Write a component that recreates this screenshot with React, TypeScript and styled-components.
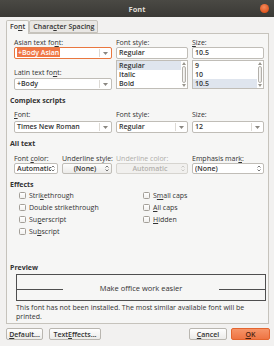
import styled, { createGlobalStyle } from 'styled-components';

const GlobalStyle = createGlobalStyle`
  html, body {
    margin: 0;
    padding: 0;
  }
  body {
    background: #f2f1f0;
    font-family: "Open Sans", "Noto Sans", "DejaVu Sans", sans-serif;
    font-size: 7px;
    color: #333;
  }
`;

function DropArrow() {
  return (
    <svg width="5" height="3" viewBox="0 0 5 3">
      <path d="M0 0 L5 0 L2.5 3 Z" fill="#8a8781" />
    </svg>
  );
}

function UpDown({ color = '#555' }: { color?: string }) {
  return (
    <svg width="4" height="7" viewBox="0 0 4 7">
      <path d="M0.5 2.5 L2 1 L3.5 2.5" stroke={color} fill="none" strokeWidth="0.8" />
      <path d="M0.5 4.5 L2 6 L3.5 4.5" stroke={color} fill="none" strokeWidth="0.8" />
    </svg>
  );
}

function ScrollBar() {
  return (
    <Scroll>
      <svg width="4" height="3" viewBox="0 0 4 3">
        <path d="M0 3 L2 0 L4 3 Z" fill="#9a978f" />
      </svg>
      <Thumb />
      <svg width="4" height="3" viewBox="0 0 4 3">
        <path d="M0 0 L4 0 L2 3 Z" fill="#9a978f" />
      </svg>
    </Scroll>
  );
}

export default function App() {
  return (
    <>
      <GlobalStyle />
      <Window>
        <TitleBar>
          <span />
          <Title>Font</Title>
          <CloseButton />
        </TitleBar>
        <Body>
          <TabBar>
            <Tab $active>
              Fo<u>n</u>t
            </Tab>
            <Tab>
              Chara<u>c</u>ter Spacing
            </Tab>
          </TabBar>
          <Panel>
            <FieldGrid $top={0}>
              <Field>
                <Label>
                  Asian text fo<u>n</u>t:
                </Label>
                <Combo $focused>
                  <ComboText>
                    <Selection>+Body Asian</Selection>
                  </ComboText>
                  <ComboArrow>
                    <DropArrow />
                  </ComboArrow>
                </Combo>
                <Label $top={9}>
                  Latin text fo<u>n</u>t:
                </Label>
                <Combo $top={1}>
                  <ComboText>+Body</ComboText>
                  <ComboArrow>
                    <DropArrow />
                  </ComboArrow>
                </Combo>
              </Field>
              <Field>
                <Label>Font style:</Label>
                <TextBox>Regular</TextBox>
                <ListBox>
                  <ListRows>
                    <ListRow $selected>Regular</ListRow>
                    <ListRow>Italic</ListRow>
                    <ListRow>Bold</ListRow>
                  </ListRows>
                  <ScrollBar />
                </ListBox>
              </Field>
              <Field>
                <Label>
                  <u>S</u>ize:
                </Label>
                <TextBox>10.5</TextBox>
                <ListBox>
                  <ListRows>
                    <ListRow>9</ListRow>
                    <ListRow>10</ListRow>
                    <ListRow $selected>10.5</ListRow>
                  </ListRows>
                  <ScrollBar />
                </ListBox>
              </Field>
            </FieldGrid>

            <Heading $top={6}>Complex scripts</Heading>
            <FieldGrid $top={5}>
              <Field>
                <Label>
                  <u>F</u>ont:
                </Label>
                <Combo $top={2}>
                  <ComboText>Times New Roman</ComboText>
                  <ComboArrow>
                    <DropArrow />
                  </ComboArrow>
                </Combo>
              </Field>
              <Field>
                <Label>Font style:</Label>
                <Combo $top={2}>
                  <ComboText>Regular</ComboText>
                  <ComboArrow>
                    <DropArrow />
                  </ComboArrow>
                </Combo>
              </Field>
              <Field>
                <Label>Size:</Label>
                <Combo $top={2}>
                  <ComboText>12</ComboText>
                  <ComboArrow>
                    <DropArrow />
                  </ComboArrow>
                </Combo>
              </Field>
            </FieldGrid>

            <Heading $top={6}>All text</Heading>
            <AllTextGrid>
              <Field>
                <Label>
                  Font <u>c</u>olor:
                </Label>
                <Spin>
                  <SpinText>Automatic</SpinText>
                  <UpDown />
                </Spin>
              </Field>
              <Field>
                <Label>Underline style:</Label>
                <Spin $variant="button">
                  <SpinText $center>(None)</SpinText>
                  <UpDown />
                </Spin>
              </Field>
              <Field>
                <Label $disabled>Underline color:</Label>
                <Spin $variant="disabled">
                  <SpinText $center>Automatic</SpinText>
                  <UpDown color="#c2c0bb" />
                </Spin>
              </Field>
              <Field>
                <Label>
                  Emphasis mar<u>k</u>:
                </Label>
                <Spin>
                  <SpinText>(None)</SpinText>
                  <UpDown />
                </Spin>
              </Field>
            </AllTextGrid>

            <Heading $top={6}>Effects</Heading>
            <Effects>
              <CheckColumn>
                <CheckRow>
                  <CheckBox />
                  <span>
                    Stri<u>k</u>ethrough
                  </span>
                </CheckRow>
                <CheckRow>
                  <CheckBox />
                  <span>Double strikethrough</span>
                </CheckRow>
                <CheckRow>
                  <CheckBox />
                  <span>
                    Su<u>p</u>erscript
                  </span>
                </CheckRow>
                <CheckRow>
                  <CheckBox />
                  <span>
                    Su<u>b</u>script
                  </span>
                </CheckRow>
              </CheckColumn>
              <CheckColumn>
                <CheckRow>
                  <CheckBox />
                  <span>
                    S<u>m</u>all caps
                  </span>
                </CheckRow>
                <CheckRow>
                  <CheckBox />
                  <span>
                    <u>A</u>ll caps
                  </span>
                </CheckRow>
                <CheckRow>
                  <CheckBox />
                  <span>
                    <u>H</u>idden
                  </span>
                </CheckRow>
              </CheckColumn>
            </Effects>

            <Heading $top={26}>Preview</Heading>
            <PreviewBox>
              <PreviewLine />
              <PreviewText>Make office work easier</PreviewText>
              <PreviewLine />
            </PreviewBox>
            <Warning>
              This font has not been installed. The most similar available font will be
              printed.
            </Warning>
          </Panel>
          <ButtonRow>
            <Button $w={37}>
              <u>D</u>efault...
            </Button>
            <Button $w={52} $gap={6}>
              Text <u>E</u>ffects...
            </Button>
            <Spacer />
            <Button $w={38}>
              <u>C</u>ancel
            </Button>
            <Button $w={39} $gap={4} $primary>
              <u>O</u>K
            </Button>
          </ButtonRow>
        </Body>
      </Window>
    </>
  );
}

/* STYLES **********************************************************/

const Window = styled.div`
  width: 274px;
  height: 346px;
  display: flex;
  flex-direction: column;
  background: #f2f1f0;
  overflow: hidden;
`;

const TitleBar = styled.div`
  height: 17px;
  flex: none;
  display: grid;
  grid-template-columns: 1fr auto 1fr;
  align-items: center;
  background: linear-gradient(#4a4944, #3a3935);
`;

const Title = styled.span`
  color: #dfdbd2;
  font-weight: 700;
  font-size: 7.5px;
`;

const CloseButton = styled.span`
  justify-self: end;
  margin-right: 5px;
  width: 9px;
  height: 9px;
  border-radius: 50%;
  background: radial-gradient(circle at 45% 35%, #f58a5c, #e0561f 70%);
`;

const Body = styled.div`
  flex: 1;
  display: flex;
  flex-direction: column;
  padding: 3px 5px 0 6px;
`;

const TabBar = styled.div`
  display: flex;
  height: 13px;
`;

const Tab = styled.div<{ $active?: boolean }>`
  position: relative;
  z-index: ${(p) => (p.$active ? 1 : 0)};
  height: ${(p) => (p.$active ? 14 : 13)}px;
  box-sizing: border-box;
  padding: 0 3px;
  line-height: 12px;
  border: 1px solid #c6c3bc;
  border-bottom: ${(p) => (p.$active ? 'none' : '1px solid #c6c3bc')};
  border-radius: 2px 2px 0 0;
  background: ${(p) => (p.$active ? '#f6f6f5' : '#e9e7e4')};
  color: #333;
  font-weight: 600;
  white-space: nowrap;
`;

const Panel = styled.div`
  height: 291px;
  box-sizing: border-box;
  border: 1px solid #c6c3bc;
  background: #f6f6f5;
  padding: 4px 4px 0 3px;
  display: flex;
  flex-direction: column;
`;

const Heading = styled.div<{ $top: number }>`
  margin-top: ${(p) => p.$top}px;
  height: 9px;
  line-height: 9px;
  font-weight: 700;
  color: #333;
`;

const FieldGrid = styled.div<{ $top: number }>`
  display: grid;
  grid-template-columns: 98px 72px 72px;
  column-gap: 4px;
  margin-left: 4px;
  margin-top: ${(p) => p.$top}px;
`;

const AllTextGrid = styled.div`
  display: grid;
  grid-template-columns: 44px 50px 72px 72px;
  column-gap: 4px;
  margin-left: 4px;
  margin-top: 6px;
`;

const Field = styled.div`
  display: flex;
  flex-direction: column;
  min-width: 0;
`;

const Label = styled.div<{ $top?: number; $disabled?: boolean }>`
  margin-top: ${(p) => p.$top ?? 0}px;
  height: 9px;
  line-height: 9px;
  white-space: nowrap;
  font-weight: 500;
  color: ${(p) => (p.$disabled ? '#b0aeaa' : '#333')};
`;

const Combo = styled.div<{ $focused?: boolean; $top?: number }>`
  margin-top: ${(p) => p.$top ?? 0}px;
  height: 12px;
  box-sizing: border-box;
  display: flex;
  align-items: center;
  border: 1px solid ${(p) => (p.$focused ? '#e9773f' : '#c0bdb7')};
  border-radius: 2px;
  background: #fff;
`;

const ComboText = styled.div`
  flex: 1;
  min-width: 0;
  padding-left: 2px;
  white-space: nowrap;
  overflow: hidden;
  line-height: 10px;
  font-weight: 600;
  color: #333;
`;

const ComboArrow = styled.div`
  width: 11px;
  height: 8px;
  display: flex;
  align-items: center;
  justify-content: center;
  border-left: 1px solid #dddad5;
`;

const Selection = styled.span`
  background: #f07746;
  color: #fff;
  padding: 0 1px;
`;

const TextBox = styled.div`
  height: 12px;
  box-sizing: border-box;
  border: 1px solid #c0bdb7;
  border-radius: 2px;
  background: #fff;
  padding-left: 2px;
  line-height: 10px;
  font-weight: 600;
  color: #333;
`;

const ListBox = styled.div`
  margin-top: 1px;
  height: 29px;
  box-sizing: border-box;
  display: flex;
  border: 1px solid #c0bdb7;
  background: #fff;
`;

const ListRows = styled.div`
  flex: 1;
  display: flex;
  flex-direction: column;
`;

const ListRow = styled.div<{ $selected?: boolean }>`
  height: 9px;
  line-height: 9px;
  padding-left: 2px;
  background: ${(p) => (p.$selected ? '#dfe5ee' : 'transparent')};
  color: #333;
  font-weight: 600;
`;

const Scroll = styled.div`
  width: 6px;
  display: flex;
  flex-direction: column;
  align-items: center;
  padding: 1px 0;
  box-sizing: border-box;
`;

const Thumb = styled.div`
  flex: 1;
  width: 4px;
  margin: 1px 0;
  box-sizing: border-box;
  border: 1px solid #b3b0aa;
  border-radius: 3px;
  background: linear-gradient(90deg, #fbfbfa, #e6e4e1);
`;

const Spin = styled.div<{ $variant?: 'button' | 'disabled' }>`
  height: 11px;
  box-sizing: border-box;
  display: flex;
  align-items: center;
  padding: 0 2px;
  border: 1px solid ${(p) => (p.$variant === 'disabled' ? '#d6d4cf' : '#c0bdb7')};
  border-radius: 2px;
  background: ${(p) =>
    p.$variant === 'button'
      ? 'linear-gradient(#fdfdfc, #ecebe9)'
      : p.$variant === 'disabled'
        ? '#f1f0ee'
        : '#fff'};
  color: ${(p) => (p.$variant === 'disabled' ? '#b3b1ad' : '#333')};
`;

const SpinText = styled.div<{ $center?: boolean }>`
  flex: 1;
  min-width: 0;
  white-space: nowrap;
  overflow: hidden;
  text-align: ${(p) => (p.$center ? 'center' : 'left')};
  line-height: 9px;
  font-weight: 600;
`;

const Effects = styled.div`
  display: grid;
  grid-template-columns: 124px 1fr;
  margin-left: 9px;
`;

const CheckColumn = styled.div`
  display: flex;
  flex-direction: column;
`;

const CheckRow = styled.div`
  height: 12px;
  display: flex;
  align-items: center;
  gap: 3px;
  white-space: nowrap;
  font-weight: 500;
  color: #333;
`;

const CheckBox = styled.span`
  width: 7px;
  height: 7px;
  box-sizing: border-box;
  border: 1px solid #a39f98;
  border-radius: 1.5px;
  background: linear-gradient(#ffffff, #f1f0ee);
`;

const PreviewBox = styled.div`
  margin: 2px 0 0 6px;
  width: 250px;
  height: 27px;
  box-sizing: border-box;
  display: flex;
  align-items: center;
  border: 1px solid #4f4f4f;
  background: #f6f6f5;
`;

const PreviewLine = styled.div`
  width: 46px;
  height: 1px;
  margin-top: 4px;
  background: #4f4f4f;
`;

const PreviewText = styled.div`
  flex: 1;
  text-align: center;
  font-size: 7.5px;
  font-weight: 500;
  color: #333;
`;

const Warning = styled.div`
  margin: 2px 0 0 6px;
  width: 250px;
  line-height: 9px;
  font-weight: 500;
  color: #333;
`;

const ButtonRow = styled.div`
  display: flex;
  margin-top: 4px;
  margin-right: -1px;
`;

const Spacer = styled.div`
  flex: 1;
`;

const Button = styled.div<{ $w: number; $gap?: number; $primary?: boolean }>`
  width: ${(p) => p.$w}px;
  margin-left: ${(p) => p.$gap ?? 0}px;
  height: 12px;
  box-sizing: border-box;
  display: flex;
  align-items: center;
  justify-content: center;
  border: 1px solid ${(p) => (p.$primary ? '#e3652f' : '#b9b6b0')};
  border-radius: 2px;
  background: ${(p) =>
    p.$primary
      ? 'linear-gradient(#f69468, #ee7443)'
      : 'linear-gradient(#fefefe, #ecebe9)'};
  color: ${(p) => (p.$primary ? '#4a2413' : '#333')};
  white-space: nowrap;
  font-weight: 600;
`;
